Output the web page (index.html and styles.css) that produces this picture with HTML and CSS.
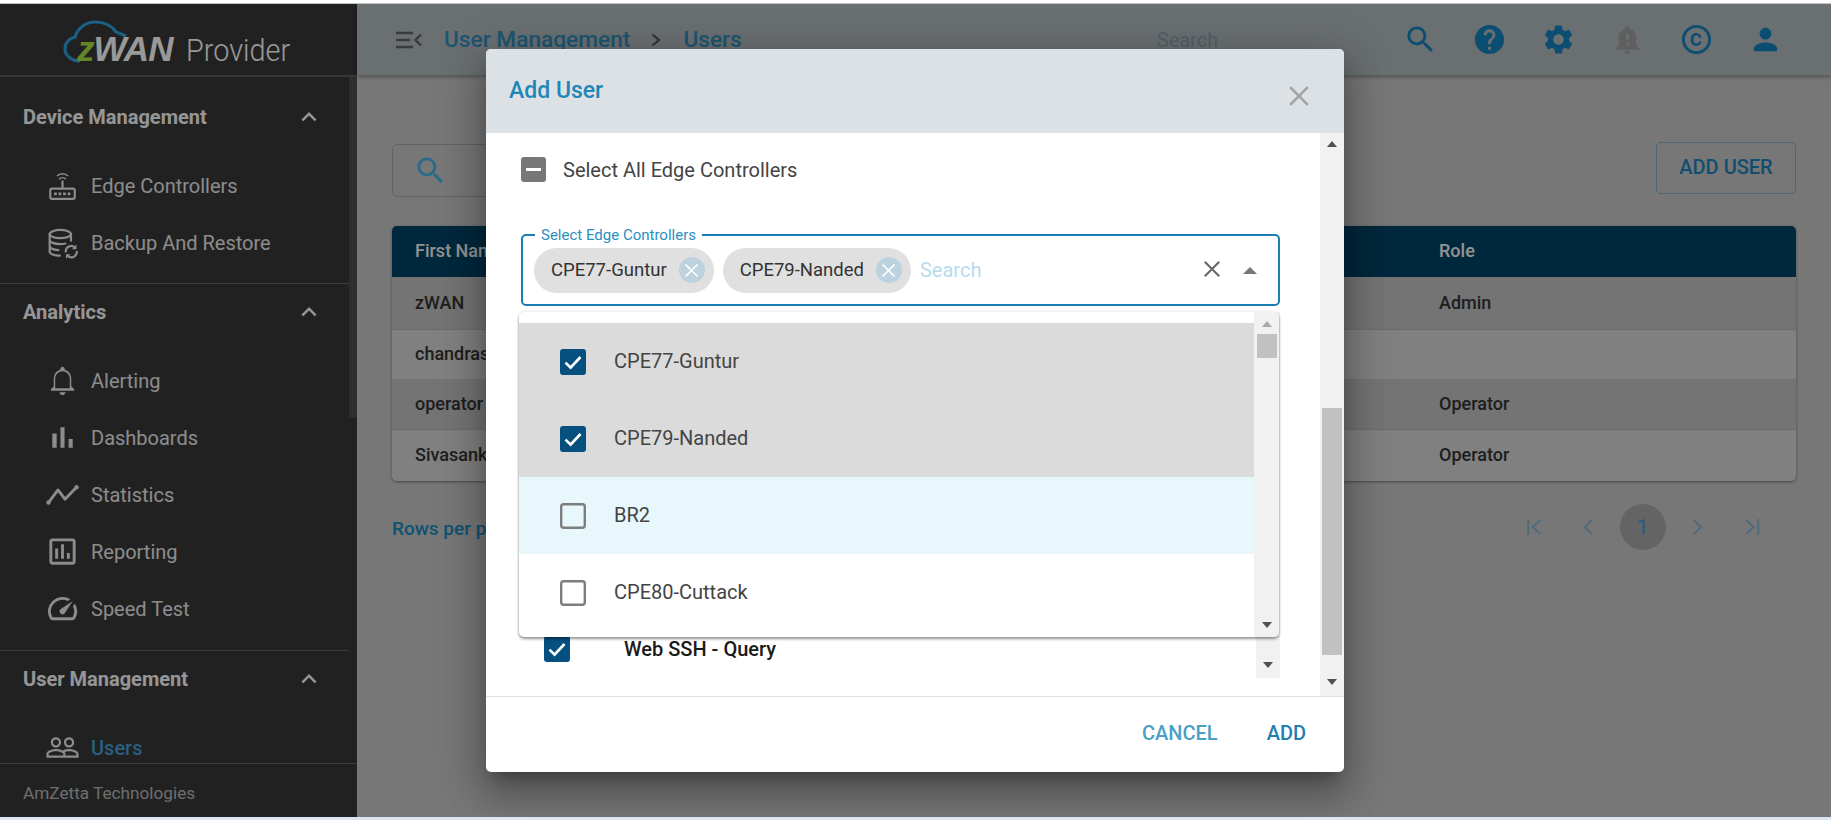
FILE: index.html
```html
<!DOCTYPE html>
<html lang="en">
<head>
<meta charset="utf-8">
<title>zWAN Provider - Users</title>
<link rel="stylesheet" href="styles.css">
</head>
<body>
<svg class="defs" width="0" height="0" aria-hidden="true">
  <defs>
    <symbol id="i-search" viewBox="0 0 24 24"><path d="M15.5 14h-.79l-.28-.27C15.41 12.59 16 11.11 16 9.5 16 5.91 13.09 3 9.5 3S3 5.91 3 9.5 5.91 16 9.5 16c1.61 0 3.09-.59 4.23-1.57l.27.28v.79l5 4.99L20.49 19l-4.99-5zm-6 0C7.01 14 5 11.99 5 9.5S7.01 5 9.5 5 14 7.01 14 9.5 11.99 14 9.5 14z"/></symbol>
    <symbol id="i-help" viewBox="0 0 24 24"><path d="M12 2C6.48 2 2 6.48 2 12s4.48 10 10 10 10-4.48 10-10S17.52 2 12 2zm1 17h-2v-2h2v2zm2.07-7.75l-.9.92C13.45 12.9 13 13.5 13 15h-2v-.5c0-1.1.45-2.1 1.17-2.83l1.24-1.26c.37-.36.59-.86.59-1.41 0-1.1-.9-2-2-2s-2 .9-2 2H8c0-2.21 1.79-4 4-4s4 1.79 4 4c0 .88-.36 1.68-.93 2.25z"/></symbol>
    <symbol id="i-gear" viewBox="0 0 24 24"><path d="M19.14 12.94c.04-.3.06-.61.06-.94 0-.32-.02-.64-.07-.94l2.03-1.58c.18-.14.23-.41.12-.61l-1.92-3.32c-.12-.22-.37-.29-.59-.22l-2.39.96c-.5-.38-1.03-.7-1.62-.94l-.36-2.54c-.04-.24-.24-.41-.48-.41h-3.84c-.24 0-.43.17-.47.41l-.36 2.54c-.59.24-1.13.57-1.62.94l-2.39-.96c-.22-.08-.47 0-.59.22L2.74 8.87c-.12.21-.08.47.12.61l2.03 1.58c-.05.3-.09.63-.09.94s.02.64.07.94l-2.03 1.58c-.18.14-.23.41-.12.61l1.92 3.32c.12.22.37.29.59.22l2.39-.96c.5.38 1.03.7 1.62.94l.36 2.54c.05.24.24.41.48.41h3.84c.24 0 .44-.17.47-.41l.36-2.54c.59-.24 1.13-.56 1.62-.94l2.39.96c.22.08.47 0 .59-.22l1.92-3.32c.12-.22.07-.47-.12-.61l-2.01-1.58zM12 15.6c-1.98 0-3.6-1.62-3.6-3.6s1.62-3.6 3.6-3.6 3.6 1.62 3.6 3.6-1.62 3.6-3.6 3.6z"/></symbol>
    <symbol id="i-bell-alert" viewBox="0 0 24 24"><path d="M18 16v-5c0-3.07-1.64-5.64-4.5-6.32V4c0-.83-.67-1.5-1.5-1.5s-1.5.67-1.5 1.5v.68C7.63 5.36 6 7.92 6 11v5l-2 2v1h16v-1l-2-2zm-5 0h-2v-2h2v2zm0-4h-2V8h2v4zm-1 10c1.1 0 2-.9 2-2h-4c0 1.1.9 2 2 2z"/></symbol>
    <symbol id="i-copyright" viewBox="0 0 24 24"><path d="M10.08 10.86c.05-.33.16-.62.3-.87s.34-.46.59-.62c.24-.15.54-.22.91-.23.23.01.44.05.63.13.2.09.38.21.52.36s.25.33.34.53.13.42.14.64h1.79c-.02-.47-.11-.9-.28-1.29s-.4-.73-.7-1.01-.66-.5-1.08-.66-.88-.23-1.39-.23c-.65 0-1.22.11-1.7.34s-.88.53-1.2.92-.56.84-.71 1.36S8 11.29 8 11.87v.27c0 .58.08 1.12.23 1.64s.39.97.71 1.35.72.69 1.2.91 1.05.34 1.7.34c.47 0 .91-.08 1.32-.23s.77-.36 1.08-.63.56-.58.74-.94.29-.74.3-1.15h-1.79c-.01.21-.06.4-.15.58s-.21.33-.36.46-.32.23-.52.3c-.19.07-.39.09-.6.1-.36-.01-.66-.08-.89-.23-.25-.16-.45-.37-.59-.62s-.25-.55-.3-.88-.08-.67-.08-1v-.27c0-.35.03-.68.08-1.01zM12 2C6.48 2 2 6.48 2 12s4.48 10 10 10 10-4.48 10-10S17.52 2 12 2zm0 18c-4.41 0-8-3.59-8-8s3.59-8 8-8 8 3.59 8 8-3.59 8-8 8z"/></symbol>
    <symbol id="i-person" viewBox="0 0 24 24"><path d="M12 12c2.21 0 4-1.79 4-4s-1.79-4-4-4-4 1.79-4 4 1.79 4 4 4zm0 2c-2.67 0-8 1.34-8 4v2h16v-2c0-2.66-5.33-4-8-4z"/></symbol>
    <symbol id="i-up" viewBox="0 0 24 24"><path d="M12 8l-6 6 1.41 1.41L12 10.83l4.59 4.58L18 14z"/></symbol>
    <symbol id="i-router" viewBox="0 0 24 24"><g fill="none" stroke="currentColor"><rect x="3.6" y="14.2" width="16.8" height="7" rx="1.3" stroke-width="1.5"/><path d="M12 8.6v5.6" stroke-width="1.5"/><path d="M9.7 7.6a3.3 3.3 0 0 1 4.6 0M8.2 5.5a5.4 5.4 0 0 1 7.6 0" stroke-width="1.1"/></g><path d="M6.2 16.8h1.9v1.9H6.2zm3.1 0h1.9v1.9H9.3zm3.1 0h1.9v1.9h-1.900zm3.1 0h1.9v1.9h-1.900z"/></symbol>
    <symbol id="i-db" viewBox="0 0 24 24"><g fill="none" stroke="currentColor" stroke-width="1.5" stroke-linecap="round"><ellipse cx="10.5" cy="6.2" rx="7.3" ry="2.8"/><path d="M3.2 6.2v12c0 1.5 2.8 2.8 7 2.8M3.2 10.3c0 1.5 3.2 2.8 7.3 2.8 1.2 0 2.5-.1 3.5-.4M3.2 14.4c0 1.4 2.6 2.6 6 2.8M17.8 6.2v4.6"/><path d="M14.2 18.2a3.7 3.7 0 0 1 6.3-2.7M21.8 18.4a3.7 3.7 0 0 1-6.3 2.7"/></g><path d="M21.6 13.4v3.2h-3.2zM14.4 23.2V20h3.2z"/></symbol>
    <symbol id="i-bell" viewBox="0 0 24 24"><path d="M12 22c1.1 0 2-.9 2-2h-4c0 1.1.9 2 2 2zm6-6v-5c0-3.07-1.63-5.64-4.5-6.32V4c0-.83-.67-1.5-1.5-1.5s-1.5.67-1.5 1.5v.68C7.64 5.36 6 7.92 6 11v5l-2 2v1h16v-1l-2-2zm-1 1.3H7V11c0-2.7 1.9-5.3 5-5.3s5 2.6 5 5.3z"/></symbol>
    <symbol id="i-bars" viewBox="0 0 24 24"><path d="M5 9.2h3V19H5zM10.6 5h2.8v14h-2.800zm5.6 8H19v6h-2.800z"/></symbol>
    <symbol id="i-stats" viewBox="0 0 24 24"><path d="M2.4 17.5 8.9 8.9l4.8 6.3L21.6 7" fill="none" stroke="currentColor" stroke-width="2" stroke-linejoin="round" stroke-linecap="round"/><circle cx="2.4" cy="17.5" r="1.5"/><circle cx="21.6" cy="7" r="1.5"/></symbol>
    <symbol id="i-report" viewBox="0 0 24 24"><path d="M19 3H5c-1.1 0-2 .9-2 2v14c0 1.1.9 2 2 2h14c1.1 0 2-.9 2-2V5c0-1.1-.9-2-2-2zm0 16H5V5h14v14zM7 10h2v7H7zm4-3h2v10h-2zm4 6h2v4h-2z"/></symbol>
    <symbol id="i-speed" viewBox="0 0 24 24"><path d="M20.38 8.57l-1.23 1.85a8 8 0 0 1-.22 7.58H5.07A8 8 0 0 1 15.58 6.85l1.85-1.23A10 10 0 0 0 3.35 19a2 2 0 0 0 1.72 1h13.85a2 2 0 0 0 1.74-1 10 10 0 0 0-.27-10.44z"/><path d="M10.59 15.41a2 2 0 0 0 2.83 0l5.66-8.49-8.49 5.66a2 2 0 0 0 0 2.83z"/></symbol>
    <symbol id="i-people" viewBox="0 0 24 24"><path d="M16.5 13c-1.2 0-3.07.34-4.5 1-1.43-.67-3.3-1-4.5-1C5.33 13 1 14.08 1 16.25V19h22v-2.75c0-2.17-4.33-3.25-6.5-3.25zm-4 4.5h-10v-1.25c0-.54 2.56-1.75 5-1.75s5 1.21 5 1.75v1.25zm9 0H14v-1.25c0-.46-.2-.86-.52-1.22.88-.3 1.96-.53 3.02-.53 2.44 0 5 1.21 5 1.75v1.25zM7.5 12c1.93 0 3.5-1.57 3.5-3.5S9.43 5 7.5 5 4 6.57 4 8.5 5.57 12 7.5 12zm0-5.5c1.1 0 2 .9 2 2s-.9 2-2 2-2-.9-2-2 .9-2 2-2zm9 5.5c1.93 0 3.5-1.57 3.5-3.5S18.43 5 16.5 5 13 6.57 13 8.5s1.57 3.5 3.5 3.5zm0-5.5c1.1 0 2 .9 2 2s-.9 2-2 2-2-.9-2-2 .9-2 2-2z"/></symbol>
    <symbol id="i-checked" viewBox="0 0 26 26"><rect x="0" y="0" width="26" height="26" rx="3" fill="#05507f"/><path d="M5.5 13.6 10.6 18.6 20.5 8" fill="none" stroke="#fff" stroke-width="2.7"/></symbol>
    <symbol id="i-unchecked" viewBox="0 0 26 26"><rect x="1.2" y="1.2" width="23.6" height="23.6" rx="2.5" fill="none" stroke="#7d7d7d" stroke-width="2.4"/></symbol>
    <symbol id="i-x" viewBox="0 0 20 20"><path d="M2 2 18 18M18 2 2 18" fill="none" stroke="currentColor" stroke-width="2.3"/></symbol>
  </defs>
</svg>

<div class="strip-top"></div>

<div class="app">
  <aside class="sidebar">
    <div class="brand">
      <svg class="brand-cloud" viewBox="0 0 70 45" width="70" height="45" aria-hidden="true"><path d="M17 42C8 42 2 36 2 30 2 23 7 19 12 18 15 8 24 3 32 3 42 3 49 7 53 13L63 17" fill="none" stroke="#2f9fdc" stroke-width="3.2"/></svg>
      <span class="brand-z">z</span><span class="brand-wan">WAN</span><span class="brand-sub">Provider</span>
    </div>
    <div class="nav-scroll">
      <nav class="nav">
        <section class="group group-first">
          <div class="group-head"><span>Device Management</span><svg class="ico-chevron"><use href="#i-up"/></svg></div>
          <a class="item"><svg class="ico"><use href="#i-router"/></svg><span>Edge Controllers</span></a>
          <a class="item"><svg class="ico"><use href="#i-db"/></svg><span>Backup And Restore</span></a>
        </section>
        <section class="group">
          <div class="group-head"><span>Analytics</span><svg class="ico-chevron"><use href="#i-up"/></svg></div>
          <a class="item"><svg class="ico"><use href="#i-bell"/></svg><span>Alerting</span></a>
          <a class="item"><svg class="ico"><use href="#i-bars"/></svg><span>Dashboards</span></a>
          <a class="item"><svg class="ico"><use href="#i-stats"/></svg><span>Statistics</span></a>
          <a class="item"><svg class="ico"><use href="#i-report"/></svg><span>Reporting</span></a>
          <a class="item"><svg class="ico"><use href="#i-speed"/></svg><span>Speed Test</span></a>
        </section>
        <section class="group group-last">
          <div class="group-head"><span>User Management</span><svg class="ico-chevron"><use href="#i-up"/></svg></div>
          <a class="item item-active"><svg class="ico"><use href="#i-people"/></svg><span>Users</span></a>
        </section>
      </nav>
      <div class="nav-thumb"></div>
    </div>
    <footer class="side-foot">AmZetta Technologies</footer>
  </aside>

  <main class="main">
    <header class="topbar">
      <svg class="toggle" viewBox="0 0 26 18" width="26" height="18" aria-hidden="true"><path d="M0 2h17M0 9h14M0 16h17" stroke="currentColor" stroke-width="2.4" fill="none"/><path d="M25 3.5 19.5 9l5.5 5.5" stroke="currentColor" stroke-width="2.4" fill="none"/></svg>
      <span class="crumb">User Management</span>
      <svg class="crumb-sep" viewBox="0 0 10 14" width="10" height="14" aria-hidden="true"><path d="M1.5 1.5 8 7l-6.5 5.5" stroke="currentColor" stroke-width="2.2" fill="none"/></svg>
      <span class="crumb">Users</span>
      <span class="top-search">Search</span>
      <div class="top-icons">
        <svg class="ico-top"><use href="#i-search"/></svg>
        <svg class="ico-top"><use href="#i-help"/></svg>
        <svg class="ico-top"><use href="#i-gear"/></svg>
        <svg class="ico-top ico-muted"><use href="#i-bell-alert"/></svg>
        <svg class="ico-top"><use href="#i-copyright"/></svg>
        <svg class="ico-top"><use href="#i-person"/></svg>
      </div>
    </header>

    <div class="content">
      <div class="toolbar">
        <div class="searchbox"><svg class="ico-box"><use href="#i-search"/></svg></div>
        <button class="btn-add">ADD USER</button>
      </div>
      <div class="table">
        <div class="row row-head"><div class="cell">First Name</div><div class="cell">Role</div></div>
        <div class="row row-dark row-tall"><div class="cell">zWAN</div><div class="cell">Admin</div></div>
        <div class="row row-light row-short"><div class="cell">chandrasekhar</div><div class="cell"></div></div>
        <div class="row row-dark"><div class="cell">operator</div><div class="cell">Operator</div></div>
        <div class="row row-light"><div class="cell">Sivasankar</div><div class="cell">Operator</div></div>
      </div>
      <div class="pager-row">
        <span class="rows-label">Rows per page:</span>
        <div class="pager">
          <svg class="pg" viewBox="0 0 16 18" aria-hidden="true"><path d="M2 1v16M14 2 6.5 9l7.5 7" fill="none" stroke="currentColor" stroke-width="2"/></svg>
          <svg class="pg" viewBox="0 0 16 18" aria-hidden="true"><path d="M11.5 2 4.5 9l7 7" fill="none" stroke="currentColor" stroke-width="2"/></svg>
          <span class="pg-current">1</span>
          <svg class="pg" viewBox="0 0 16 18" aria-hidden="true"><path d="M4.5 2l7 7-7 7" fill="none" stroke="currentColor" stroke-width="2"/></svg>
          <svg class="pg" viewBox="0 0 16 18" aria-hidden="true"><path d="M14 1v16M2 2l7.5 7-7.5 7" fill="none" stroke="currentColor" stroke-width="2"/></svg>
        </div>
      </div>
    </div>
  </main>

  <div class="backdrop"></div>

  <div class="modal">
    <div class="modal-head">
      <h2 class="modal-title">Add User</h2>
      <svg class="modal-close"><use href="#i-x"/></svg>
    </div>
    <div class="modal-body">
      <div class="modal-content">
        <label class="select-all">
          <span class="box-mixed"><span class="box-mixed-bar"></span></span>
          <span>Select All Edge Controllers</span>
        </label>
        <div class="field-wrap">
          <div class="field">
            <span class="legend">Select Edge Controllers</span>
            <span class="chip"><span>CPE77-Guntur</span><span class="chip-x"><svg class="chip-x-ico"><use href="#i-x"/></svg></span></span>
            <span class="chip"><span>CPE79-Nanded</span><span class="chip-x"><svg class="chip-x-ico"><use href="#i-x"/></svg></span></span>
            <span class="placeholder">Search</span>
            <svg class="clear"><use href="#i-x"/></svg>
            <span class="caret-up"></span>
          </div>
          <div class="popup">
            <ul class="options">
              <li class="opt opt-selected"><svg class="cb"><use href="#i-checked"/></svg><span>CPE77-Guntur</span></li>
              <li class="opt opt-selected"><svg class="cb"><use href="#i-checked"/></svg><span>CPE79-Nanded</span></li>
              <li class="opt opt-hover"><svg class="cb"><use href="#i-unchecked"/></svg><span>BR2</span></li>
              <li class="opt"><svg class="cb"><use href="#i-unchecked"/></svg><span>CPE80-Cuttack</span></li>
            </ul>
            <div class="sb sb-popup">
              <span class="sb-up sb-up-light"></span>
              <span class="sb-thumb sb-thumb-small"></span>
              <span class="sb-down"></span>
            </div>
          </div>
        </div>
        <div class="perm-list">
          <div class="perm-inner">
            <div class="perm-row"><svg class="cb"><use href="#i-checked"/></svg><span>Web SSH - Query</span></div>
          </div>
          <div class="sb sb-perm"><span class="sb-down"></span></div>
        </div>
      </div>
      <div class="sb sb-modal">
        <span class="sb-up"></span>
        <span class="sb-thumb sb-thumb-modal"></span>
        <span class="sb-down"></span>
      </div>
    </div>
    <div class="modal-foot">
      <button class="btn-text btn-cancel">CANCEL</button>
      <button class="btn-text btn-ok">ADD</button>
    </div>
  </div>
</div>

<div class="strip-bottom"></div>
</body>
</html>
```

FILE: styles.css
```css
* { box-sizing: border-box; }
html, body { margin: 0; padding: 0; height: 100%; overflow: hidden; }
body { font-family: Roboto, "Liberation Sans", sans-serif; display: flex; flex-direction: column; background: #fff; }
.defs { position: absolute; }
.strip-top { height: 4px; flex: none; background: #fff; border-bottom: 1px solid #c4c4c4; }
.strip-bottom { height: 3px; flex: none; background: #dbe6f3; }

.app { position: relative; flex: 1; display: flex; min-height: 0; overflow: hidden; }

/* sidebar */
.sidebar { width: 357px; flex: none; display: flex; flex-direction: column; background: #373737; color: #e9e9e9; }
.brand { position: relative; height: 73px; flex: none; border-bottom: 2px solid #5c5c5c; padding: 27px 0 0 77px; display: flex; align-items: baseline; line-height: 36px; }
.brand-cloud { position: absolute; left: 63px; top: 15px; }
.brand-z, .brand-wan { position: relative; font-family: "Liberation Sans", sans-serif; font-weight: 700; font-style: italic; font-size: 35px; letter-spacing: -.9px; }
.brand-z { color: #a9e040; }
.brand-wan { color: #fff; }
.brand-sub { font-size: 31px; font-weight: 300; color: #fff; margin-left: 13px; transform: scaleX(.93); transform-origin: left center; }

.nav-scroll { flex: 1; min-height: 0; display: flex; }
.nav { flex: 1; min-width: 0; overflow: hidden; }
.nav-thumb { width: 8px; height: 341px; flex: none; background: #4d4d4d; }
.group { padding-bottom: 12px; border-bottom: 1px solid #616161; }
.group-first { padding-top: 12px; }
.group + .group { padding-bottom: 13px; }
.group-last { border-bottom: 0; }
.group-head { height: 56px; margin-bottom: 12px; padding: 0 25px 0 23px; display: flex; align-items: center; justify-content: space-between; font-size: 20px; font-weight: 700; color: #fafafa; }
.ico-chevron { width: 30px; height: 30px; fill: #fafafa; }
.item { height: 57px; padding-left: 45px; display: flex; align-items: center; gap: 11px; font-size: 20px; color: #e9e9e9; }
.ico { width: 35px; height: 35px; flex: none; fill: currentColor; color: #e9e9e9; }
.item-active { color: #469ed2; font-weight: 500; }
.side-foot { height: 54px; flex: none; border-top: 1px solid #616161; padding: 19px 0 0 23px; font-size: 17.2px; color: #b9b9b9; line-height: 20px; position: relative; background: #373737; }

/* main */
.main { flex: 1; min-width: 0; display: flex; flex-direction: column; background: #c6c6c6; }
.topbar { height: 71px; flex: none; display: flex; align-items: center; padding-left: 39px; background: #b1b9be; box-shadow: 0 2px 4px rgba(0,0,0,.3); position: relative; }
.toggle { color: #616161; margin-right: 22px; }
.crumb { font-size: 22.7px; font-weight: 500; color: #328ebb; }
.crumb-sep { color: #555; margin: 0 22px 0 21px; }
.top-search { font-size: 20px; color: #8aa0ac; margin-left: 415px; }
.top-icons { margin-left: 185px; display: flex; gap: 34px; }
.ico-top { width: 35px; height: 35px; fill: #1482be; }
.ico-muted { fill: #9e9e9e; }

.content { padding: 67px 35px 0; }
.toolbar { display: flex; justify-content: space-between; align-items: flex-start; height: 84px; }
.searchbox { width: 640px; height: 53px; margin-top: 2px; border: 1px solid #a6a6a6; border-radius: 5px; padding: 8px 0 0 20px; }
.ico-box { width: 35px; height: 35px; fill: #48b0e6; }
.btn-add { width: 140px; height: 52px; border: 1px solid #78acc9; border-radius: 5px; background: transparent; color: #1c82bb; font: 500 20px Roboto, sans-serif; padding: 0 0 2px; }
.table { border-radius: 5px; box-shadow: 0 1px 3px rgba(0,0,0,.4); overflow: hidden; }
.row { display: grid; grid-template-columns: 1024px 1fr; align-items: center; height: 51px; padding-bottom: 3px; font-size: 18px; font-weight: 500; color: #333; }
.row-head { background: #004467; color: #f4f4f4; padding-bottom: 2px; }
.row-dark { background: #c1c1c1; border-bottom: 1px solid #b5b5b5; padding-bottom: 2px; }
.row-light { background: #d5d5d5; }
.row-tall { height: 53px; }
.row-short { height: 49px; }
.cell { padding-left: 23px; white-space: nowrap; }
.pager-row { display: flex; justify-content: space-between; align-items: center; margin-top: 23px; height: 46px; }
.rows-label { font-size: 19px; font-weight: 500; color: #198ac0; margin-top: 2px; }
.pager { display: flex; align-items: center; margin-right: 17px; }
.pg { width: 54.5px; height: 18px; color: #84b2cf; }
.pg-current { width: 46px; height: 46px; margin: 0 4.25px; border-radius: 50%; background: #a7a7a7; color: #329ede; font-size: 21px; display: flex; align-items: center; justify-content: center; }

/* modal */
.backdrop { position: absolute; inset: 0; background: rgba(0,0,0,.4); }
.modal { position: absolute; left: 486px; top: 45px; width: 858px; height: 723px; display: flex; flex-direction: column; background: #fff; border-radius: 5px; box-shadow: 0 11px 15px -7px rgba(0,0,0,.3), 0 24px 38px 3px rgba(0,0,0,.2), 0 9px 46px 8px rgba(0,0,0,.16); overflow: hidden; }
.modal-head { height: 84px; flex: none; background: #dce1e5; display: flex; align-items: center; justify-content: space-between; padding: 0 34px 0 24px; }
.modal-title { margin: 0; font-size: 23px; font-weight: 500; color: #1f86b5; padding-bottom: 1px; margin-left: -1px; }
.modal-close { width: 22px; height: 22px; color: #a2a2a2; margin-top: 9px; }
.modal-body { height: 563px; flex: none; display: flex; }
.modal-content { flex: 1; min-width: 0; padding: 24px 40px 0 35px; }
.select-all { display: flex; align-items: center; gap: 17px; height: 25px; font-size: 20px; color: #444; }
.box-mixed { width: 25px; height: 25px; border-radius: 3px; background: #777; display: flex; align-items: center; justify-content: center; }
.box-mixed-bar { width: 15px; height: 3px; background: #fff; }
.field-wrap { position: relative; margin-top: 52px; }
.field { position: relative; height: 72px; border: 2px solid #1a7fb0; border-radius: 5px; display: flex; align-items: center; gap: 9px; padding: 0 0 0 11px; }
.legend { position: absolute; left: 12px; top: -9px; padding: 0 6px; background: #fff; font-size: 15px; line-height: 16px; color: #2a8fbf; }
.chip { height: 45px; border-radius: 23px; background: #e0e0e0; display: flex; align-items: center; gap: 12px; padding: 0 9px 0 17px; font-size: 18.5px; color: #333; }
.chip-x { width: 26px; height: 26px; border-radius: 50%; background: #bcd3df; display: flex; align-items: center; justify-content: center; }
.chip-x-ico { width: 15px; height: 15px; color: #fff; }
.placeholder { font-size: 20px; color: #b6dcec; flex: 1; }
.clear { width: 18px; height: 18px; color: #666; margin: -2px 13px 0 0; }
.caret-up { width: 0; height: 0; border-left: 7px solid transparent; border-right: 7px solid transparent; border-bottom: 7px solid #777; margin-right: 21px; }

.popup { position: absolute; left: -2px; top: 78px; width: 760px; height: 325px; display: flex; background: #fff; border-radius: 5px; box-shadow: 0 2px 3px rgba(0,0,0,.4), 0 0 3px rgba(0,0,0,.12); overflow: hidden; z-index: 1; }
.options { flex: 1; margin: 0; padding: 11px 0 0; list-style: none; }
.opt { height: 77px; display: flex; align-items: center; gap: 28px; padding-left: 41px; font-size: 20px; color: #444; }
.opt span { margin-top: -2px; }
.opt-selected { background: #dbdbdb; }
.opt-hover { background: #e8f7fb; }
.cb { width: 26px; height: 26px; flex: none; }

.sb { flex: none; background: #f1f1f1; display: flex; flex-direction: column; align-items: center; position: relative; }
.sb-up { width: 0; height: 0; margin-top: 8px; border-left: 5.5px solid transparent; border-right: 5.5px solid transparent; border-bottom: 6px solid #505050; flex: none; }
.sb-up-light { border-bottom-color: #a9a9a9; margin-top: 9px; }
.sb-down { width: 0; height: 0; margin-top: auto; border-left: 5.5px solid transparent; border-right: 5.5px solid transparent; border-top: 6px solid #505050; flex: none; }
.sb-thumb { width: 20px; background: #c1c1c1; flex: none; }
.sb-popup { width: 25px; padding-bottom: 9px; }
.sb-thumb-small { height: 24px; margin-top: 7px; }
.sb-modal { width: 24px; height: 100%; padding-bottom: 11px; }
.sb-thumb-modal { height: 247px; margin-top: 261px; }
.perm-list { display: flex; height: 366px; margin-top: 6px; }
.perm-inner { flex: 1; display: flex; flex-direction: column; justify-content: flex-end; }
.perm-row { height: 56px; display: flex; align-items: center; gap: 54px; padding: 0 0 2px 23px; font-size: 20px; font-weight: 500; color: #1a1a1a; }
.sb-perm { width: 24px; padding-bottom: 10px; }

.modal-foot { flex: 1; border-top: 1px solid #e2e2e2; display: flex; justify-content: flex-end; align-items: center; gap: 49px; padding: 0 38px 4px 0; }
.btn-text { border: 0; padding: 0; background: transparent; font: 500 20px Roboto, sans-serif; }
.btn-cancel { color: #4b9fc6; }
.btn-ok { color: #1f80b0; }
```
